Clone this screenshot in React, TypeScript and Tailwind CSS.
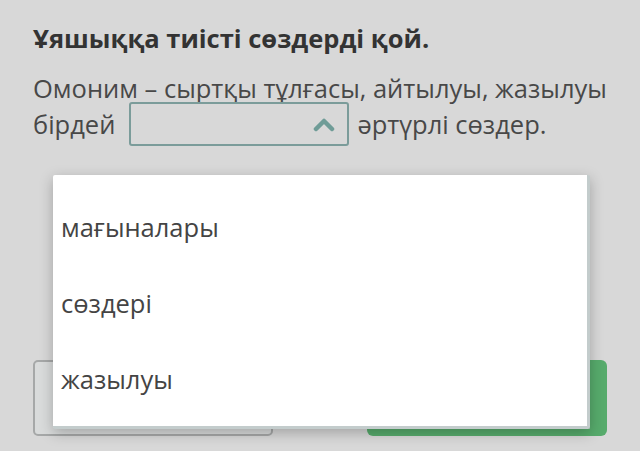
import React from "react";

const options = ["мағыналары", "сөздері", "жазылуы"];

function ChevronUp() {
  return (
    <svg width="22" height="16" viewBox="0 0 22 16" className="block">
      <path d="M3 13 L11 5 L19 13" fill="none" stroke="#6f9c97" strokeWidth="4.5" strokeLinecap="round" strokeLinejoin="round" />
    </svg>
  );
}

export default function App() {
  return (
    <div
      className="relative h-[451px] w-[640px] overflow-hidden bg-[#d8d8d8] text-[#444]"
      style={{ fontFamily: '"Open Sans", "Noto Sans", sans-serif' }}
    >
      <div className="px-[33px] pt-[22px]">
        <h1 className="text-[25.5px] font-bold leading-[32px] text-[#333]">Ұяшыққа тиісті сөздерді қой.</h1>
        <div className="mt-[17px] text-[25.5px] text-[#484848]">
          <p className="leading-[34px]">Омоним – сыртқы тұлғасы, айтылуы, жазылуы</p>
          <div className="-mt-[3px] flex items-center leading-[34px]">
            <span>бірдей</span>
            <div className="ml-[14px] mr-[8px] flex h-[44px] w-[220px] items-center justify-end rounded-[3px] border-2 border-[#7b9c9a] pr-[12px]">
              <ChevronUp />
            </div>
            <span>әртүрлі сөздер.</span>
          </div>
        </div>
        <div className="mt-[214px] flex justify-between">
          <div className="h-[76px] w-[240px] rounded-[5px] border-2 border-[#a6a8a8] bg-[#d9dbdb]" />
          <div className="h-[76px] w-[240px] rounded-[6px] bg-[#57ab6c]" />
        </div>
      </div>

      <div className="absolute left-[53px] top-[175px] h-[254px] w-[537px] rounded-[2px] border-r-[3px] border-b-[3px] border-[#c3cccc] bg-white pt-[14px] shadow-[0_4px_14px_rgba(0,0,0,0.25)]">
        {options.map((o) => (
          <div key={o} className="flex h-[76px] items-center pl-[8px] text-[25.5px] text-[#444]">
            {o}
          </div>
        ))}
      </div>
    </div>
  );
}
